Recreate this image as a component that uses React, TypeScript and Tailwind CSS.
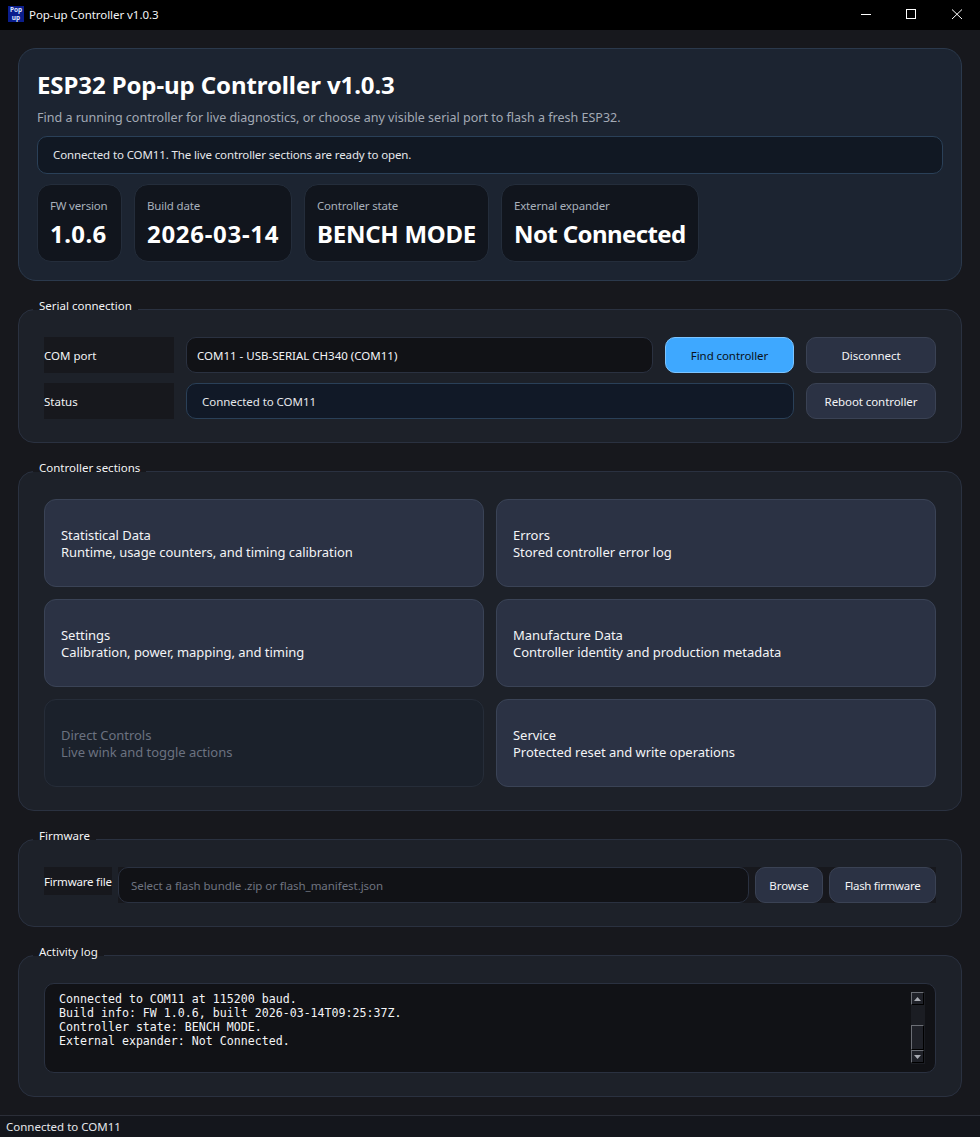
const ui = "font-['Noto_Sans','Open_Sans',sans-serif]";

function Group({ title, children, className }: { title: string; children: React.ReactNode; className?: string }) {
  return (
    <section className={`relative rounded-[16px] border border-[#2a3140] bg-[#1d2129] pt-[27px] pb-[23px] px-[25px] ${className ?? ""}`}>
      <span className="absolute left-[14px] top-[-12px] h-[12px] whitespace-nowrap bg-[#17181d] px-[6px] text-[11.5px] leading-[16px] text-[#f3f4f6]">{title}</span>
      {children}
    </section>
  );
}

function Stat({ label, value, w, track }: { label: string; value: string; w: string; track: string }) {
  return (
    <div className={`h-[78px] rounded-[14px] border border-[#242d3b] bg-[#11151d] pl-[12px] pt-[12px] ${w}`}>
      <div className="whitespace-nowrap text-[11.5px] leading-[18px] tracking-[-0.18px] text-[#a8b0bb]">{label}</div>
      <div className={`mt-[3px] whitespace-nowrap text-[24px] font-bold leading-[32px] text-white ${track}`}>{value}</div>
    </div>
  );
}

function Btn({ children, w, primary, track }: { children: React.ReactNode; w?: string; primary?: boolean; track?: string }) {
  return (
    <button
      className={`h-[36px] rounded-[10px] border pt-[1px] text-[11.5px] font-normal ${track ?? "tracking-[-0.08px]"} ${w ?? ""} ${
        primary ? "border-[#7cc4ff] bg-[#3ea8ff] text-[#0b1220]" : "border-[#3a4254] bg-[#2b3244] text-[#f3f4f6]"
      }`}
    >
      {children}
    </button>
  );
}

function Card({ title, sub, disabled }: { title: string; sub: string; disabled?: boolean }) {
  return (
    <div
      className={`flex h-[88px] flex-col justify-center rounded-[12px] border pl-[16px] pt-[2px] text-[13px] leading-[17px] tracking-[-0.04px] ${
        disabled ? "border-[#262d39] bg-[#1b212b] text-[#6b7280]" : "border-[#3a4356] bg-[#2b3244] text-[#f3f4f6]"
      }`}
    >
      <div>{title}</div>
      <div>{sub}</div>
    </div>
  );
}

function ScrollBtn({ up }: { up?: boolean }) {
  return (
    <div className="flex h-[13px] w-[13px] items-center justify-center border-t border-l border-t-[#6b6e75] border-l-[#6b6e75] border-r border-b border-r-black border-b-black bg-[#1f2128]">
      <svg width="7" height="4" viewBox="0 0 7 4">
        <path d={up ? "M3.5 0 L7 4 H0 Z" : "M0 0 H7 L3.5 4 Z"} fill="#a8abb2" />
      </svg>
    </div>
  );
}

export default function App() {
  return (
    <div className={`flex h-[1137px] w-[980px] flex-col overflow-hidden bg-[#17181d] ${ui}`}>
      <header className="flex h-[30px] shrink-0 items-center bg-black pl-[8px]">
        <div className="mt-[-2px] flex h-[16px] w-[16px] flex-col items-center justify-center bg-[#0b1e8c] text-[6.5px] font-bold leading-[8px] text-[#dbe4ff]">
          <span>Pop</span>
          <span>up</span>
        </div>
        <span className="ml-[5px] text-[11.5px] tracking-[-0.05px] text-[#f3f4f6]">Pop-up Controller v1.0.3</span>
        <svg className="ml-auto mr-[10px]" width="112" height="30" viewBox="0 0 112 30" fill="none" stroke="#ffffff" strokeWidth="1">
          <path d="M3 14.5 H13" />
          <rect x="48.5" y="9.5" width="9" height="9" />
          <path d="M94 9.5 L104 19 M104 9.5 L94 19" />
        </svg>
      </header>

      <main className="flex flex-1 flex-col gap-[28px] px-[18px] pt-[18px]">
        <section className="h-[233px] rounded-[18px] border border-[#2b394c] bg-[#1c2431] px-[18px] pt-[18px]">
          <h1 className="text-[24px] font-bold leading-[36px] tracking-[-0.1px] text-white">ESP32 Pop-up Controller v1.0.3</h1>
          <p className="mt-[6px] text-[12.5px] leading-[18px] text-[#a3aab5]">
            Find a running controller for live diagnostics, or choose any visible serial port to flash a fresh ESP32.
          </p>
          <div className="mt-[9px] flex h-[38px] items-center rounded-[10px] border border-[#2a4058] bg-[#111823] pl-[15px] text-[11.5px] tracking-[-0.12px] text-[#e5e7eb]">
            Connected to COM11. The live controller sections are ready to open.
          </div>
          <div className="mt-[10px] flex gap-[12px]">
            <Stat label="FW version" value="1.0.6" w="w-[85px]" track="tracking-[0.4px]" />
            <Stat label="Build date" value="2026-03-14" w="w-[158px]" track="tracking-[0.7px]" />
            <Stat label="Controller state" value="BENCH MODE" w="w-[185px]" track="tracking-[-0.25px]" />
            <Stat label="External expander" value="Not Connected" w="w-[198px]" track="tracking-[-0.6px]" />
          </div>
        </section>

        <Group title="Serial connection" className="h-[134px]">
          <div className="grid grid-cols-[130px_467px_129px_130px] grid-rows-[36px_36px] gap-x-[12px] gap-y-[10px]">
            <div className="flex items-center bg-[#17181d] pt-[1px] text-[11.5px] text-[#f3f4f6]">COM port</div>
            <div className="flex items-center rounded-[10px] border border-[#2a3140] bg-[#111216] pl-[10px] pt-[1px] text-[11.5px] text-[#f3f4f6]">
              COM11 - USB-SERIAL CH340 (COM11)
            </div>
            <Btn primary>Find controller</Btn>
            <Btn>Disconnect</Btn>
            <div className="flex items-center bg-[#17181d] pt-[1px] text-[11.5px] text-[#f3f4f6]">Status</div>
            <div className="col-span-2 flex items-center rounded-[10px] border border-[#2a4058] bg-[#111927] pl-[15px] pt-[1px] text-[11.5px] tracking-[-0.05px] text-[#e5e7eb]">
              Connected to COM11
            </div>
            <Btn>Reboot controller</Btn>
          </div>
        </Group>

        <Group title="Controller sections" className="h-[340px]">
          <div className="grid grid-cols-2 gap-[12px]">
            <Card title="Statistical Data" sub="Runtime, usage counters, and timing calibration" />
            <Card title="Errors" sub="Stored controller error log" />
            <Card title="Settings" sub="Calibration, power, mapping, and timing" />
            <Card title="Manufacture Data" sub="Controller identity and production metadata" />
            <Card title="Direct Controls" sub="Live wink and toggle actions" disabled />
            <Card title="Service" sub="Protected reset and write operations" />
          </div>
        </Group>

        <Group title="Firmware" className="h-[88px]">
          <div className="flex">
            <div className="h-[28px] w-[68px] whitespace-nowrap bg-[#17181d] text-[11.5px] leading-[29px] tracking-[-0.2px] text-[#f3f4f6]">Firmware file</div>
            <div className="ml-[6px] flex flex-1 gap-[6px] bg-[#17181d]">
              <div className="flex h-[36px] flex-1 items-center rounded-[10px] border border-[#2a3140] bg-[#111216] pl-[12px] pt-[1px] text-[11.5px] tracking-[-0.05px] text-[#6f7480]">
                Select a flash bundle .zip or flash_manifest.json
              </div>
              <Btn w="w-[68px]">Browse</Btn>
              <Btn w="w-[107px]" track="tracking-[-0.3px]">Flash firmware</Btn>
            </div>
          </div>
        </Group>

        <Group title="Activity log" className="h-[142px]">
          <div className="relative h-[90px] rounded-[10px] border border-[#2a3140] bg-[#111216] pl-[14px] pt-[8px] font-['DejaVu_Sans_Mono',monospace] text-[11.62px] leading-[14px] text-[#f3f4f6]">
            <div>Connected to COM11 at 115200 baud.</div>
            <div>Build info: FW 1.0.6, built 2026-03-14T09:25:37Z.</div>
            <div>Controller state: BENCH MODE.</div>
            <div>External expander: Not Connected.</div>
            <div className="absolute right-[10px] top-[8px] flex h-[72px] w-[14px] flex-col bg-[#1b1d23]">
              <ScrollBtn up />
              <div className="mt-[20px] h-[25px] w-[13px] border-t border-l border-t-[#6b6e75] border-l-[#6b6e75] border-r border-b border-r-black border-b-black bg-[#1f2128]" />
              <ScrollBtn />
            </div>
          </div>
        </Group>
      </main>

      <footer className="flex h-[22px] shrink-0 items-center border-t border-[#2b2e38] bg-[#14161c] pl-[6px] text-[11.5px] text-[#e5e7eb]">
        Connected to COM11
      </footer>
    </div>
  );
}
